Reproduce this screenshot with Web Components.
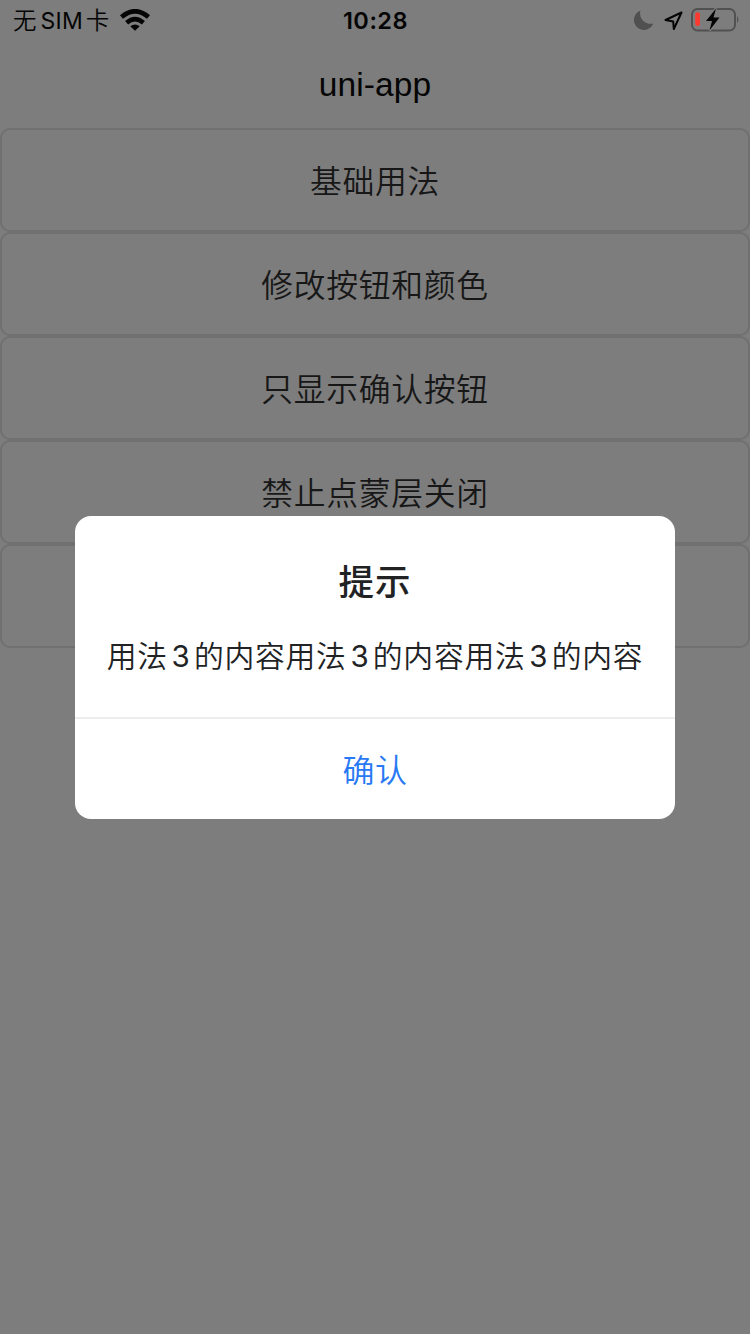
<!DOCTYPE html>
<html lang="zh-CN">
<head>
<meta charset="utf-8">
<title>uni-app</title>
<style>
html,body{margin:0;height:100%;background:#7d7d7d;overflow:hidden}
</style>
</head>
<body>
<demo-app></demo-app>
<script>
const define = (name, html) => customElements.define(name, class extends HTMLElement {
  constructor() {
    super();
    this.attachShadow({ mode: 'open' }).innerHTML = html;
  }
});

define('status-bar', `
<style>
:host{display:grid;grid-template-columns:1fr auto 1fr;align-items:center;height:40px;padding:0 12px 0 13px;font-size:23.500px;line-height:38px;color:#050505}
.left,.right{display:flex;align-items:center}
.left{height:40px}
.right{justify-content:flex-end;margin-right:-12px}
.sim{white-space:nowrap;height:40px}
.latin{font:400 23px/38px Inter,"Liberation Sans",sans-serif;letter-spacing:.300px;margin:0 2.500px 0 4px}
.time{font:600 23.500px/40px Inter,"Liberation Sans",sans-serif;letter-spacing:.500px;padding-top:1px;height:40px;box-sizing:border-box}
svg{display:block}
.wifi{margin-left:10.500px}
</style>
<div class="left"><span class="sim">无<span class="latin">SIM</span>卡</span>
<svg class="wifi" width="30" height="22" viewBox="0 0 30 22"><g fill="none" stroke="#050505" stroke-width="4.600"><path d="M1.500 8Q15-3.500 28.500 8"/><path d="M6.600 13.700Q15 6.500 23.400 13.700"/></g><path d="M10.300 17.300Q15 13.500 19.700 17.300L15 21.700Z" fill="#050505"/></svg></div>
<div class="time">10:28</div>
<div class="right"><svg width="118" height="40" viewBox="632 0 118 40">
<path d="M640.500 10.500A10 10 0 1 0 653.300 23.500C646.500 25.500 638 19 640.500 10.500Z" fill="#505050"/>
<path d="M681.500 12.500L665.500 20L673.200 21.500L673.800 29Z" fill="none" stroke="#050505" stroke-width="2" stroke-linejoin="round"/>
<rect x="692" y="9" width="43" height="21.500" rx="5.500" fill="none" stroke="#515151" stroke-width="2"/>
<path d="M737 16Q740 19.500 737 23Z" fill="#515151"/>
<rect x="695.200" y="12.300" width="4.800" height="13.700" rx="2" fill="#fb3b32"/>
<path d="M716 8.500L706 21H712L709.500 30.500L719.500 17.500H713.500Z" fill="#050505" stroke="#7d7d7d" stroke-width="2.600" paint-order="stroke"/>
</svg></div>`);

define('nav-title', `
<style>:host{display:flex;box-sizing:border-box;align-items:center;justify-content:center;height:88px;padding-top:2px;font:33.500px/86px "Liberation Sans",Arial,sans-serif;letter-spacing:.1px;color:#050505}</style>
<slot></slot>`);

define('demo-button', `
<style>:host{display:flex;box-sizing:border-box;align-items:center;justify-content:center;height:104px;border:2px solid #707070;border-radius:10px;font-size:31.800px;letter-spacing:.700px;color:#171717;padding-bottom:3px}</style>
<slot></slot>`);

define('modal-dialog', `
<style>
:host{display:flex;flex-direction:column;width:600px;height:303px;border-radius:16px;background:#fff;color:#212224;overflow:hidden;text-align:center}
.title{margin-top:38px;height:52px;line-height:52px;font-size:35.500px;font-weight:500;letter-spacing:1px}
.content{margin-top:26px;height:44px;line-height:44px;font-size:29.800px;letter-spacing:.750px;white-space:nowrap}
.footer{margin-top:auto;box-sizing:border-box;height:102px;border-top:2px solid #ededed;line-height:99px;font-size:32px;letter-spacing:.600px;color:#2979f4}
</style>
<div class="title"><slot name="title"></slot></div>
<div class="content"><slot></slot></div>
<div class="footer"><slot name="confirm"></slot></div>`);

define('demo-app', `
<style>
:host{display:block;position:relative;width:750px;height:1334px;background:#7d7d7d;font-family:"Noto Sans CJK SC","Liberation Sans",sans-serif;font-weight:350}
.n{font-family:Inter,sans-serif;font-size:29.500px;font-weight:400;margin:0 3.400px 0 3.800px}
.layer{position:absolute;inset:0;display:flex;align-items:center;justify-content:center}
</style>
<status-bar></status-bar>
<nav-title>uni-app</nav-title>
<demo-button>基础用法</demo-button>
<demo-button>修改按钮和颜色</demo-button>
<demo-button>只显示确认按钮</demo-button>
<demo-button>禁止点蒙层关闭</demo-button>
<demo-button></demo-button>
<div class="layer"><modal-dialog><span slot="title">提示</span>用法<span class="n">3</span>的内容用法<span class="n">3</span>的内容用法<span class="n">3</span>的内容<span slot="confirm">确认</span></modal-dialog></div>`);
</script>
</body>
</html>
